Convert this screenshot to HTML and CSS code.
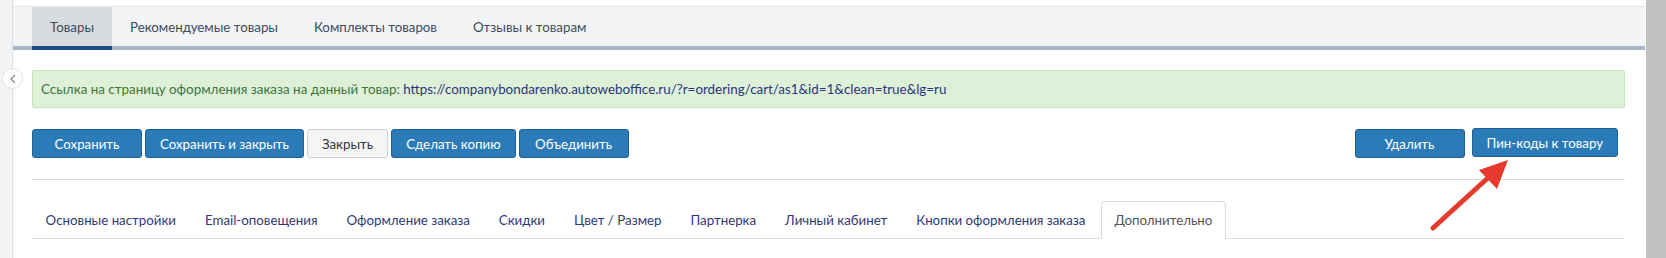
FILE: index.html
```html
<!DOCTYPE html>
<html lang="ru">
<head>
    <title>Товар</title>
    <meta charset="UTF-8">
    <meta name="viewport" content="width=device-width, initial-scale=1">
    <link rel="stylesheet" href="styles.css">
</head>
<body>
    <aside class="sidebar">
        <button class="sidebar-toggle" type="button">
            <svg width="10" height="10" viewBox="0 0 10 10"><path d="M6.5 1.5 L3 5 L6.5 8.5" fill="none" stroke="#8a8f96" stroke-width="1.4" stroke-linecap="round" stroke-linejoin="round"/></svg>
        </button>
    </aside>
    <main class="main">
        <nav class="top-tabs">
            <a class="top-tab active">Товары</a>
            <a class="top-tab">Рекомендуемые товары</a>
            <a class="top-tab">Комплекты товаров</a>
            <a class="top-tab">Отзывы к товарам</a>
        </nav>
        <div class="content">
            <div class="alert">Ссылка на страницу оформления заказа на данный товар: <a class="alert-link">https://companybondarenko.autoweboffice.ru/?r=ordering/cart/as1&amp;id=1&amp;clean=true&amp;lg=ru</a></div>
            <div class="toolbar">
                <div class="btn-group">
                    <button class="btn btn-primary">Сохранить</button>
                    <button class="btn btn-primary">Сохранить и закрыть</button>
                    <button class="btn btn-default">Закрыть</button>
                    <button class="btn btn-primary">Сделать копию</button>
                    <button class="btn btn-primary">Объединить</button>
                </div>
                <div class="btn-group btn-group-right">
                    <button class="btn btn-primary">Удалить</button>
                    <button class="btn btn-primary pin-btn">Пин-коды к товару</button>
                </div>
            </div>
            <hr class="divider">
            <ul class="nav-tabs">
                <li><a>Основные настройки</a></li>
                <li><a>Email-оповещения</a></li>
                <li><a>Оформление заказа</a></li>
                <li><a>Скидки</a></li>
                <li><a>Цвет / Размер</a></li>
                <li><a>Партнерка</a></li>
                <li><a>Личный кабинет</a></li>
                <li><a>Кнопки оформления заказа</a></li>
                <li class="active"><a>Дополнительно</a></li>
            </ul>
        </div>
    </main>
    <div class="scrollbar"></div>
    <svg class="pointer-arrow" width="90" height="80" viewBox="0 0 90 80">
        <line x1="5" y1="73" x2="62" y2="21" stroke="#e63a2e" stroke-width="5" stroke-linecap="round"/>
        <polygon points="80,5 51,15 69,34" fill="#e63a2e"/>
    </svg>
</body>
</html>
```

FILE: styles.css
```css
body, html {
    margin: 0;
    padding: 0;
    height: 100%;
    overflow: hidden;
}

body {
    display: flex;
    font-family: Lato, "Liberation Sans", sans-serif;
    font-size: 13.3px;
    background: #fff;
    position: relative;
}

.sidebar {
    width: 12px;
    flex: none;
    background: #f3f4f6;
    border-right: 1px solid #dcdee1;
    position: relative;
}

.sidebar-toggle {
    position: absolute;
    top: 68px;
    left: 2px;
    width: 21px;
    height: 21px;
    padding: 0;
    border-radius: 50%;
    border: 1px solid #e0e2e5;
    background: #fff;
    display: flex;
    align-items: center;
    justify-content: center;
    z-index: 2;
}

.main {
    flex: 1;
    padding-top: 6px;
}

.scrollbar {
    width: 20px;
    flex: none;
    background: #c1c1c1;
}

/* top tabs */

.top-tabs {
    display: flex;
    height: 39px;
    margin-right: 1px;
    padding-left: 19px;
    background: #f3f4f6;
    border-top: 1px solid #e2e4e7;
    border-bottom: 4px solid #a9b7c9;
}

.top-tab {
    display: flex;
    align-items: center;
    padding: 0 18px;
    margin-bottom: -4px;
    border-bottom: 4px solid transparent;
    color: #3d4b5d;
}

.top-tab.active {
    background: #d8dbe0;
    border-bottom-color: #1c4d86;
}

.content {
    padding: 20px 21px 0 19px;
}

/* alert */

.alert {
    height: 36px;
    line-height: 36px;
    padding: 0 8px;
    background: #dff0d8;
    border: 1px solid #c5e4b4;
    border-radius: 2px;
    color: #3c763d;
    font-size: 13.4px;
}

.alert-link {
    color: #28367c;
}

/* buttons */

.toolbar {
    display: flex;
    justify-content: space-between;
    margin-top: 21px;
}

.btn-group {
    display: flex;
    gap: 3px;
}

.btn-group-right {
    gap: 7px;
    margin-right: 7px;
}

.btn {
    height: 29px;
    min-width: 110px;
    padding: 0 14px;
    border: 1px solid;
    border-radius: 3px;
    font-family: inherit;
    font-size: 13.3px;
    cursor: pointer;
}

.btn-primary {
    background: #2b7bb9;
    border-color: #215f93;
    color: #fff;
}

.btn-default {
    min-width: 0;
    background: #f5f5f5;
    border-color: #cfcfcf;
    color: #333;
}

.pin-btn {
    margin-top: -1px;
}

.divider {
    margin: 21px 0 0;
    border: 0;
    border-top: 1px solid #d9d9d9;
}

/* bottom tabs */

.nav-tabs {
    display: flex;
    list-style: none;
    margin: 21px 0 0;
    padding: 0;
    border-bottom: 1px solid #dddddd;
}

.nav-tabs li {
    margin-right: 2px;
    margin-bottom: -1px;
}

.nav-tabs a {
    display: block;
    padding: 10px 12.4px 10px 12.6px;
    line-height: 16px;
    border: 1px solid transparent;
    border-radius: 4px 4px 0 0;
    color: #2e3b73;
}

.nav-tabs .active a {
    background: #fff;
    border-color: #dddddd;
    border-bottom-color: #fff;
    color: #555;
}

.pointer-arrow {
    position: absolute;
    left: 1428px;
    top: 155px;
}
```
